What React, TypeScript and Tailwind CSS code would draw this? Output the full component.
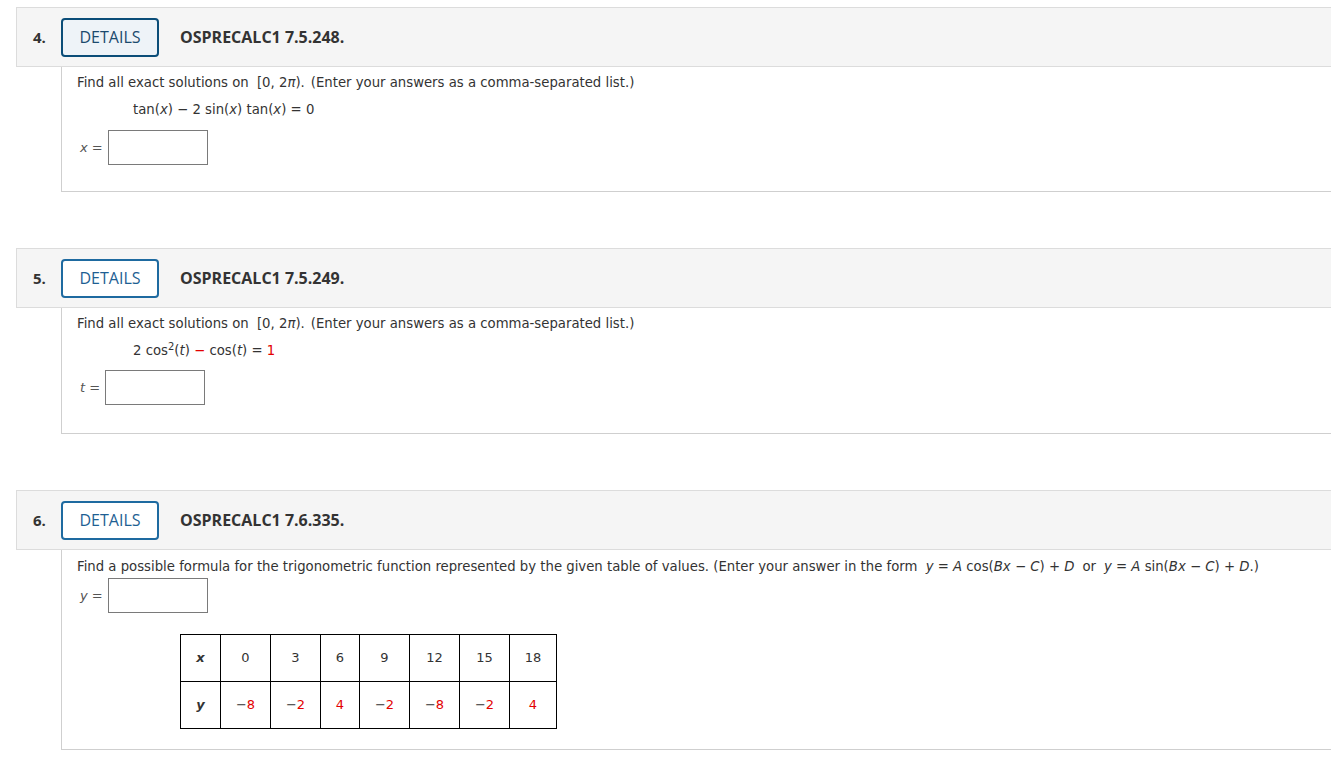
import React from 'react';

const body = "font-['Verdana','DejaVu_Sans',sans-serif]";

function Header({ num, code, focused }: { num: string; code: string; focused?: boolean }) {
  return (
    <div className="ml-[16px] flex h-[60px] items-center border border-r-0 border-[#dcdcdc] bg-[#f5f5f5]">
      <span className="w-[44px] pl-[16px] text-[15px] font-bold text-[#333] font-['Open_Sans',sans-serif]">
        {num}
      </span>
      <button
        className={
          'h-[39px] w-[98px] rounded-[4px] border-2 text-[16px] font-["Open_Sans",sans-serif] ' +
          (focused
            ? 'border-[#0b4d78] bg-[#eef3f8] text-[#1b4a6e]'
            : 'border-[#1e6aa0] bg-white text-[#1e5f93]')
        }
      >
        DETAILS
      </button>
      <span className="ml-[21px] text-[16px] font-bold text-[#333] font-['Open_Sans',sans-serif]">
        {code}
      </span>
    </div>
  );
}

function Answer({ v }: { v: string }) {
  return (
    <div className="flex items-center pl-[18px]">
      <span className="mr-[5px] whitespace-nowrap text-[13px] text-[#555]">
        <i>{v}</i> =
      </span>
      <div className="h-[35px] w-[100px] border border-[#7a7a7a] bg-white" />
    </div>
  );
}

const Red = ({ children }: { children: React.ReactNode }) => (
  <span className="text-[#e30000]">{children}</span>
);

function Question({
  num,
  code,
  focused,
  children,
  className,
}: {
  num: string;
  code: string;
  focused?: boolean;
  children: React.ReactNode;
  className?: string;
}) {
  return (
    <div className={className}>
      <Header num={num} code={code} focused={focused} />
      <div className={'ml-[61px] border-b border-l border-[#cfcfcf] text-[13.25px] text-[#333] ' + body}>
        {children}
      </div>
    </div>
  );
}

const xs = ['0', '3', '6', '9', '12', '15', '18'];
const ys: [string, string][] = [
  ['−', '8'],
  ['−', '2'],
  ['', '4'],
  ['−', '2'],
  ['−', '8'],
  ['−', '2'],
  ['', '4'],
];
const widths = ['w-[50px]', 'w-[50px]', 'w-[39px]', 'w-[50px]', 'w-[50px]', 'w-[50px]', 'w-[47px]'];

export default function App() {
  return (
    <div className="min-h-screen bg-white pt-[7px]">
      <Question num="4." code="OSPRECALC1 7.5.248." focused>
        <div className="pt-[7px] pb-[26px]">
          <p className="pl-[15px] leading-[17px]">
            Find all exact solutions on <span className="ml-[4px]">[0, 2<i>π</i>).</span>
            <span className="ml-[6px]">(Enter your answers as a comma-separated list.)</span>
          </p>
          <p className="mt-[10px] pl-[71px] leading-[17px]">
            tan(<i>x</i>) − 2 sin(<i>x</i>) tan(<i>x</i>) = 0
          </p>
          <div className="mt-[12px]">
            <Answer v="x" />
          </div>
        </div>
      </Question>

      <Question num="5." code="OSPRECALC1 7.5.249." className="mt-[56px]">
        <div className="pt-[7px] pb-[28px]">
          <p className="pl-[15px] leading-[17px]">
            Find all exact solutions on <span className="ml-[4px]">[0, 2<i>π</i>).</span>
            <span className="ml-[6px]">(Enter your answers as a comma-separated list.)</span>
          </p>
          <p className="mt-[10px] pl-[71px] leading-[17px]">
            2 cos<sup className="text-[10px]">2</sup>(<i>t</i>) <Red>−</Red> cos(<i>t</i>) = <Red>1</Red>
          </p>
          <div className="mt-[11px]">
            <Answer v="t" />
          </div>
        </div>
      </Question>

      <Question num="6." code="OSPRECALC1 7.6.335." className="mt-[56px]">
        <div className="pt-[8px] pb-[20px]">
          <p className="pl-[15px] leading-[17px]">
            Find a possible formula for the trigonometric function represented by the given table of values. (Enter
            your answer in the form <span className="ml-[4px]"><i>y</i> = <i>A</i> cos(<i>Bx</i> − <i>C</i>) + <i>D</i></span>
            <span className="mx-[8px]">or</span>
            <i>y</i> = <i>A</i> sin(<i>Bx</i> − <i>C</i>) + <i>D</i>.)
          </p>
          <div className="mt-[3px]">
            <Answer v="y" />
          </div>
          <table className="mt-[21px] ml-[118px] border-collapse text-[13px]">
            <tbody>
              <tr className="h-[47px]">
                <td className="w-[40px] border border-black text-center font-bold italic">x</td>
                {xs.map((x, i) => (
                  <td key={i} className={'border border-black text-center ' + widths[i]}>
                    {x}
                  </td>
                ))}
              </tr>
              <tr className="h-[47px]">
                <td className="border border-black text-center font-bold italic">y</td>
                {ys.map(([s, n], i) => (
                  <td key={i} className="border border-black text-center">
                    {s}
                    <Red>{n}</Red>
                  </td>
                ))}
              </tr>
            </tbody>
          </table>
        </div>
      </Question>
    </div>
  );
}
